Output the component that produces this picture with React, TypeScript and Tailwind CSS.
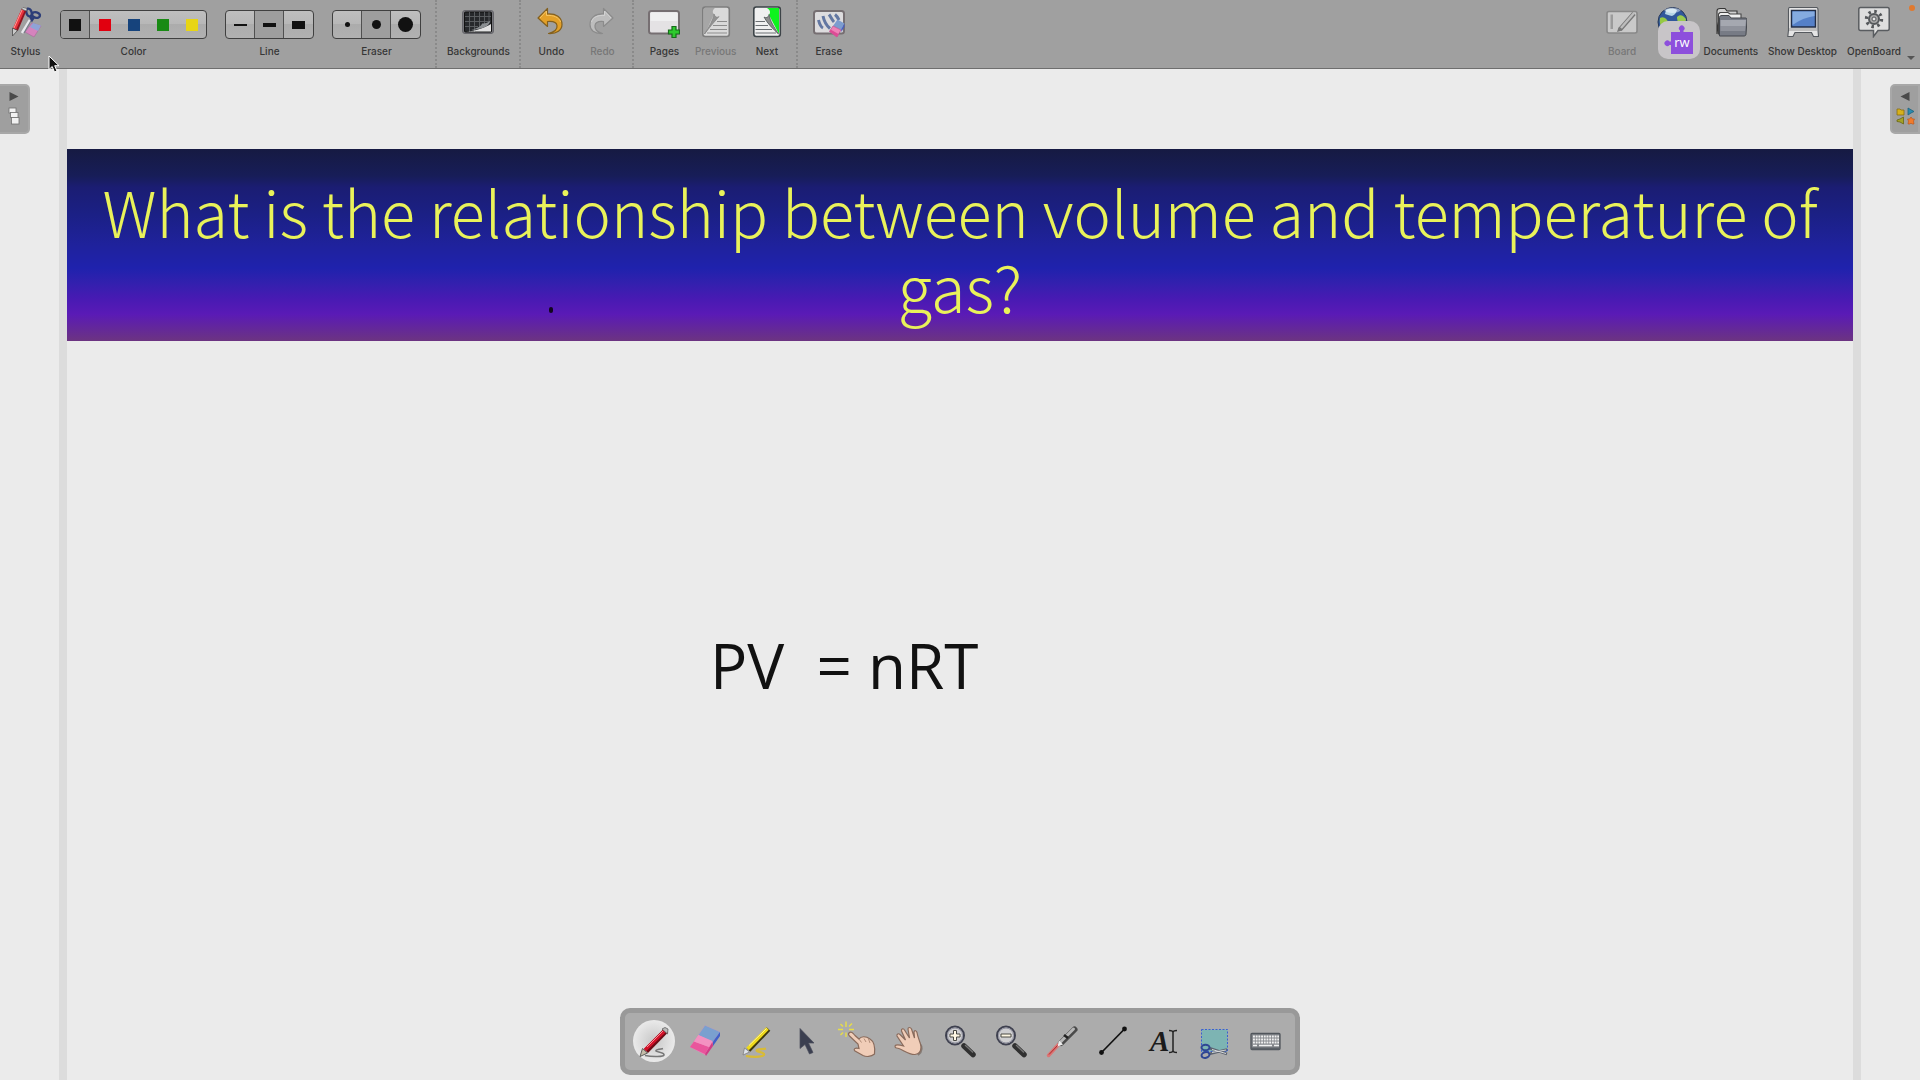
import type { ReactNode } from 'react';
import clsx from 'clsx';

function TopIcon({ children }: { children: ReactNode }) {
  return (
    <svg width="32" height="32" viewBox="0 0 32 32" fill="none" aria-hidden="true">
      {children}
    </svg>
  );
}

function StylusIcon() {
  return (
    <TopIcon>
      <path d="M15 26 L22 17 L31 20 L24 31 Z" fill="#d583bd" stroke="#a8689a" strokeWidth="0.6" />
      <path d="M20 21 L23 17 L31 19.500 L28 25 Z" fill="#8fa3d6" />
      <path d="M20 14 L12 27" stroke="#e8e8ec" strokeWidth="2.6" />
      <path d="M22 13 L14 27" stroke="#777b88" strokeWidth="1.2" />
      <ellipse cx="19" cy="6.5" rx="2.6" ry="4" transform="rotate(-20 19 6.5)" stroke="#2c3d78" strokeWidth="2.4" />
      <ellipse cx="26" cy="9" rx="4" ry="2.8" transform="rotate(15 26 9)" stroke="#2c3d78" strokeWidth="2.4" />
      <path d="M20 10 L22 14 L24 11" stroke="#2c3d78" strokeWidth="2.4" />
      <path d="M14 4 L5.500 24" stroke="#8f1420" strokeWidth="5" />
      <path d="M13 4 L4.500 23" stroke="#e8323c" strokeWidth="3.4" />
      <path d="M12 4 L4 22" stroke="#ff9a96" strokeWidth="1" />
      <path d="M2.500 22 L7.500 24.500 L2.500 30 Z" fill="#c9c9c9" stroke="#4a4a4a" strokeWidth="0.8" />
      <path d="M11.500 3 L16.500 5 L17 2.500 L13 1.500 Z" fill="#dadada" stroke="#555" strokeWidth="0.6" />
    </TopIcon>
  );
}

function BackgroundsIcon() {
  return (
    <TopIcon>
      <rect x="0.5" y="4.500" width="31" height="23" rx="2.500" fill="#77777c" stroke="#66666b" />
      <rect x="2.500" y="6" width="27" height="20" rx="1" fill="#26282b" stroke="#111" />
      <path d="M7.500 6V26M12.500 6V26M17.500 6V22M22.500 6V20M27 6V16M3 10.500H29M3 15.500H27M3 20.500H16" stroke="#5d6164" strokeWidth="0.9" />
      <path d="M4 25.500 C14 25 22 22 29 18 V25.500 Z" fill="#e2e2e2" />
      <path d="M9 24 C17 22 20 19 20 17.500 C23 18 26 16.500 28.500 14.500 C27 20 22 23 9 24 Z" fill="#8b8f92" />
    </TopIcon>
  );
}

function UndoIcon() {
  return (
    <TopIcon>
      <path
        d="M3 12 L12.500 2.500 V8 C21 7.500 27 11 27 18.500 C27 24 22 28 13.500 27.500 C19.500 26 22.500 23 22 19.500 C21.500 16 17.500 15 12.500 15.500 V20.500 Z"
        fill="#e3a028" stroke="#83601f" strokeWidth="1.200" strokeLinejoin="round"
      />
      <path d="M5 12 L11.500 5 V9.500 C18 9 24 11 25.500 16" stroke="#f5c565" strokeWidth="1" />
    </TopIcon>
  );
}

function RedoIcon() {
  return (
    <TopIcon>
      <path
        d="M27 12 L17.500 2.500 V8 C9 7.500 4 12 4 18.500 C4 24 8 28 16.500 27.500 C11 26 8.500 23 9 19.500 C9.500 16 13 15 17.500 15.500 V20.500 Z"
        fill="#bdbdbd" stroke="#8b8b8b" strokeWidth="1.200" strokeLinejoin="round"
      />
      <path d="M25 12 L18.500 5 V9.500 C12 9 7 11 5.500 16" stroke="#d2d2d2" strokeWidth="1" />
    </TopIcon>
  );
}

function PagesIcon() {
  return (
    <TopIcon>
      <rect x="1" y="5" width="30" height="22.500" rx="2.500" fill="#e4e2e4" stroke="#766f72" strokeWidth="2" />
      <path d="M2.500 6.500H29.500V15H2.500Z" fill="#efeff0" />
      <path d="M24 20.500h4v3.500h3.500v4H28v3.500h-4V28h-3.500v-4H24Z" fill="#2dcb2d" stroke="#176b1b" strokeWidth="1.200" />
    </TopIcon>
  );
}

function PreviousIcon() {
  return (
    <TopIcon>
      <rect x="2.800" y="1" width="26.500" height="29.500" rx="2.500" fill="#dadada" stroke="#7d7d7d" strokeWidth="1.600" />
      <path d="M4 2 H15 C12 4 12.500 7 14 8 L5 28 H4 Z" fill="#a6a6a6" />
      <path d="M14 8 C15 11 17 12 19 10.500 C14 16 9 22 4.500 28 C9 21 13 14 14 8Z" fill="#929292" stroke="#818181" strokeWidth="0.7" />
      <path d="M17 15.500H27M13 19.500H27M10 23.500H27M7 27H27" stroke="#8d8d8d" strokeWidth="1" />
    </TopIcon>
  );
}

function NextIcon() {
  return (
    <TopIcon>
      <rect x="2.800" y="1" width="26.500" height="29.500" rx="2.500" fill="#f0f0f0" stroke="#3d4448" strokeWidth="1.600" />
      <path d="M16 2 H28 V28 L18 9 C20 6 19 4 16 2 Z" fill="#0ef31e" />
      <path d="M13 11 C15 12.500 18 11 18 8.500 C19 15 23 21 27.500 28 C22 23 16 17 13 11Z" fill="#8c8c8c" stroke="#4f5557" strokeWidth="0.8" />
      <path d="M4.500 15.500H14M4.500 19.500H17M4.500 23.500H21M4.500 27H25" stroke="#6b6f72" strokeWidth="1" />
    </TopIcon>
  );
}

function EraseIcon() {
  return (
    <TopIcon>
      <rect x="1" y="5" width="30" height="22.500" rx="2.500" fill="#dddcde" stroke="#766f72" strokeWidth="2" />
      <path d="M5.500 14 C6.500 18 8 21 10 22M10 10 C11 15 14 20 17 22.500M16 8.500 C18 11 19 14 21 16M22 8.500 C24 10 25 12 26 14" stroke="#6377a2" strokeWidth="3" />
      <path d="M20 20 L24.500 13.500 L31.500 17.500 L28 24 Z" fill="#7c9ccf" />
      <path d="M28 23.500 L31.500 17.500 V20.500 L28.500 26Z" fill="#4a60bd" />
      <path d="M16.500 25.500 L20 20 L28 24 L24 31 Z" fill="#ee82b8" stroke="#b84d8b" strokeWidth="0.7" />
      <path d="M16.500 25.500 L17.500 23.500 L25.500 28 L24 31 Z" fill="#dd4b95" />
    </TopIcon>
  );
}

function BoardIcon() {
  return (
    <TopIcon>
      <rect x="1" y="5.500" width="30" height="21.500" rx="2" fill="#c9c9c9" stroke="#888" strokeWidth="1.600" />
      <rect x="4.500" y="8.500" width="2.500" height="14.500" fill="#9b9b9b" />
      <path d="M28 7.500 L14 23.500" stroke="#777" strokeWidth="4.500" />
      <path d="M28 7 L15 22" stroke="#bdbdbd" strokeWidth="2.400" />
      <path d="M11 26 L12.500 21.500 L16 24.500 Z" fill="#777" />
    </TopIcon>
  );
}

function WebIcon() {
  return (
    <TopIcon>
      <circle cx="15.500" cy="16" r="14.500" fill="#31589b" stroke="#263758" />
      <path d="M9 4 C12 2 17 2 20 4 C19 7 18 9 15 10 C12 9 10 9 8 8Z" fill="#b7d6e5" />
      <path d="M3 12 C7 10 10 13 11 16 L9 26 C5 23 2 19 3 12Z" fill="#96c943" />
      <path d="M20 11 C23 8 26 9 29 13 L28 19 C24 21 20 17 20 11Z" fill="#9acb4e" />
      <path d="M7 4 C11 1 19 1 24 4 C21 8 10 8 7 4Z" fill="#ffffff" opacity="0.45" />
    </TopIcon>
  );
}

function DocumentsIcon() {
  return (
    <TopIcon>
      <path d="M2 28 V5 C2 3 3 2.500 5 2.500 H10 L12 5 H22 V12 H4Z" fill="#cfcfcf" stroke="#353535" strokeWidth="1.100" />
      <path d="M3.500 28 V8 L5 6.500 H13 L15 8 H26 V14 L4 28Z" fill="#eeeeee" stroke="#454545" strokeWidth="1.100" />
      <path d="M4.500 30 V11.500 C4.500 10 5.500 9.500 7 9.500 H14 L16 12 H30 C31.500 12 32 12.500 32 14 L31 28 C31 29.500 30 30 29 30 Z" fill="#777b85" stroke="#44474d" />
      <path d="M5.500 14 H31 L30.500 20 H5.500Z" fill="#a5a8b0" />
      <path d="M5.500 20 H30.500 L30 25 H5.500Z" fill="#8f929b" />
    </TopIcon>
  );
}

function DesktopIcon() {
  return (
    <TopIcon>
      <path d="M2.500 1.500 H29.500 C31 1.500 31 2.500 31 4 V24 L31.500 30.500 H26.500 L24.500 26.500 H8 L6 30.500 H0.800 L1.500 24 V4 C1.500 2.500 1.500 1.500 2.500 1.500Z" fill="#e5e5e5" stroke="#55595e" strokeWidth="1.100" />
      <path d="M2 22 H30 V25 H2Z" fill="#bebebe" />
      <rect x="4.500" y="4.500" width="24" height="16.500" fill="#5580c8" stroke="#222c44" strokeWidth="1.500" />
      <path d="M5.500 5.500 H27.500 V10 C20 11 12 14 5.500 19Z" fill="#85abe0" />
    </TopIcon>
  );
}

function OpenBoardIcon() {
  return (
    <TopIcon>
      <path d="M2.500 1.500 H29.500 C31 1.500 31.200 2.500 31.200 3.500 V22.500 C31.200 24 30.500 24.500 29.500 24.500 H20 L15.500 30.500 V24.500 H2.500 C1 24.500 0.800 23.500 0.800 22.500 V3.500 C0.800 2 1.500 1.500 2.500 1.500Z" fill="#dedede" stroke="#595c60" strokeWidth="1.500" />
      <circle cx="16" cy="13" r="7.600" stroke="#55585b" strokeWidth="3.200" strokeDasharray="2.500 3.470" />
      <circle cx="16" cy="13" r="5" fill="#a7a7a7" stroke="#55585b" strokeWidth="2" />
      <circle cx="16" cy="13" r="2" fill="#e7e7e7" stroke="#55585b" />
    </TopIcon>
  );
}

function ToolButton({ label, icon, disabled }: { label: string; icon: ReactNode; disabled?: boolean }) {
  return (
    <button
      disabled={disabled}
      className={clsx(
        'flex min-w-[51px] flex-col items-center gap-[5px] px-[5px] pt-[6px]',
        disabled ? 'text-[#777777]' : 'text-[#363636]'
      )}
    >
      {icon}
      <span className="whitespace-nowrap">{label}</span>
    </button>
  );
}

function Segmented({ label, items, selected, divided }: { label: string; items: ReactNode[]; selected: number; divided?: boolean }) {
  return (
    <div className="flex flex-col items-center gap-[4px] pt-[10px]">
      <div
        role="group"
        aria-label={label}
        className="flex h-[29px] overflow-hidden rounded-[4px] border border-[#404040] bg-[linear-gradient(#bfbfbf,#b7b7b7_49%,#acacac_50%,#b1b1b1)]"
      >
        {items.map((item, i) => (
          <button
            key={i}
            aria-label={`${label} ${i + 1}`}
            aria-pressed={i === selected}
            className={clsx(
              'flex w-[29px] items-center justify-center',
              i === selected && 'bg-[#9e9e9e]',
              i < items.length - 1 && (divided || i === 0) && 'border-r border-[#505050]'
            )}
          >
            {item}
          </button>
        ))}
      </div>
      <span className="text-[#363636]">{label}</span>
    </div>
  );
}

function Separator() {
  return <div className="border-l-2 border-dotted border-[#8a8a8a]" />;
}

const colors = [
  <span className="h-3 w-3 bg-[#111111]" />,
  <span className="h-3 w-3 bg-[#e1000f]" />,
  <span className="h-3 w-3 bg-[#16437c]" />,
  <span className="h-3 w-3 bg-[#198a14]" />,
  <span className="h-3 w-3 bg-[#e8d514]" />,
];

const lines = [
  <span className="h-[2px] w-[13px] bg-[#111111]" />,
  <span className="h-[4px] w-[13px] bg-[#111111]" />,
  <span className="h-[8px] w-[13px] bg-[#111111]" />,
];

const erasers = [
  <span className="h-[5px] w-[5px] rounded-full bg-[#111111]" />,
  <span className="h-[9px] w-[9px] rounded-full bg-[#111111]" />,
  <span className="h-[15px] w-[15px] rounded-full bg-[#111111]" />,
];

function WebButton() {
  return (
    <button aria-label="Web" className="relative flex w-[51px] flex-col items-center pt-[6px]">
      <WebIcon />
      <span className="absolute left-[10px] top-[21px] flex h-[38px] w-[42px] items-center justify-center rounded-[10px] bg-[#c8c5c8]">
        <svg width="30" height="30" viewBox="0 0 30 30" aria-hidden="true">
          <path d="M7 7 H16 V5.500 A2.800 2.800 0 1 1 19.500 5.500 V7 H29 V29 H7 V20 H5.500 A2.800 2.800 0 1 1 5.500 16.500 H7 Z" fill="#8d4fdc" />
          <text x="18" y="22" textAnchor="middle" fill="#ffffff" fontFamily="Open Sans, sans-serif" fontSize="13">rw</text>
        </svg>
      </span>
    </button>
  );
}

function Toolbar() {
  return (
    <header className="relative flex h-[69px] border-b border-[#6e6e6e] bg-[#a0a0a0] text-[10px] font-medium leading-4">
      <ToolButton label="Stylus" icon={<StylusIcon />} />
      <div className="ml-[9px] mr-[14px] flex gap-[18px]">
        <Segmented label="Color" items={colors} selected={0} />
        <Segmented label="Line" items={lines} selected={1} divided />
        <Segmented label="Eraser" items={erasers} selected={1} divided />
      </div>
      <Separator />
      <div className="flex pl-[5px] pr-[4px]">
        <ToolButton label="Backgrounds" icon={<BackgroundsIcon />} />
      </div>
      <Separator />
      <div className="flex pl-[5px] pr-[4px]">
        <ToolButton label="Undo" icon={<UndoIcon />} />
        <ToolButton label="Redo" icon={<RedoIcon />} disabled />
      </div>
      <Separator />
      <div className="flex pl-[5px] pr-[4px]">
        <ToolButton label="Pages" icon={<PagesIcon />} />
        <ToolButton label="Previous" icon={<PreviousIcon />} disabled />
        <ToolButton label="Next" icon={<NextIcon />} />
      </div>
      <Separator />
      <div className="flex pl-[5px] pr-[4px]">
        <ToolButton label="Erase" icon={<EraseIcon />} />
      </div>
      <div className="ml-auto flex pr-[14px]">
        <ToolButton label="Board" icon={<BoardIcon />} disabled />
        <WebButton />
        <ToolButton label="Documents" icon={<DocumentsIcon />} />
        <ToolButton label="Show Desktop" icon={<DesktopIcon />} />
        <ToolButton label="OpenBoard" icon={<OpenBoardIcon />} />
      </div>
      <span className="absolute right-[5px] top-[5px] h-[6px] w-[6px] rounded-full bg-[#e0792f]" />
      <span className="absolute bottom-[8px] right-[5px] border-x-[4px] border-t-[4px] border-x-transparent border-t-[#555555]" />
      <svg className="absolute left-[48px] top-[55px] z-20" width="12" height="19" viewBox="0 0 12 19" aria-hidden="true">
        <path d="M1 1 V14.500 L4.200 11.500 L6.500 17 L9 16 L6.700 10.700 H11 Z" fill="#111" stroke="#fff" strokeWidth="1" />
      </svg>
    </header>
  );
}

function PaletteIcon({ children }: { children: ReactNode }) {
  return (
    <svg width="42" height="42" viewBox="0 0 42 42" fill="none" aria-hidden="true">
      {children}
    </svg>
  );
}

function Lens({ plus }: { plus?: boolean }) {
  return (
    <>
      <path d="M25 26 L34 34.500" stroke="#303030" strokeWidth="5.500" strokeLinecap="round" />
      <path d="M26 25 L34 32.500" stroke="#777" strokeWidth="1.300" />
      <circle cx="16" cy="15.500" r="9" fill="#cfcfd1" stroke="#3f4150" strokeWidth="2" />
      <circle cx="16" cy="15.500" r="7.500" stroke="#8d8e9c" strokeWidth="1" />
      <path
        d={plus ? 'M14.500 10.500h3v3.500h3.500v3h-3.500v3.500h-3V17H11v-3h3.500Z' : 'M11 14h10v3H11Z'}
        fill="#fff8e4" stroke="#4a4a45" strokeWidth="1"
      />
    </>
  );
}

const paletteTools: { name: string; icon: ReactNode }[] = [
  {
    name: 'Pen',
    icon: (
      <>
        <path d="M12 35.500 C19 37 32 37 31 34.500 C30 32 22 32 23 30.500 C24 29 29 29 30 28.500" stroke="#777" strokeWidth="1.500" />
        <path d="M33 10.500 L13 31" stroke="#6d0b14" strokeWidth="5.500" />
        <path d="M32 10.500 L12 30" stroke="#d3122a" strokeWidth="3.500" />
        <path d="M30.500 10.500 L14 27" stroke="#f98b92" strokeWidth="1" />
        <path d="M29 9 L32 7.500 L35 9 L34.500 14 Z" fill="#b9b9b9" stroke="#555" strokeWidth="0.700" />
        <path d="M9.500 28.500 L14.500 33 L7 36.500 Z" fill="#c4bda9" stroke="#444" strokeWidth="0.800" />
      </>
    ),
  },
  {
    name: 'Eraser',
    icon: (
      <>
        <path d="M6 27 L21 5.500 L36 12 L21 35 Z" fill="#e885b8" />
        <path d="M14.500 15 L21 5.500 L36 12 L28.500 22 Z" fill="#7aa0cf" />
        <path d="M29 21.500 L36 12 V16 L29 26 Z" fill="#3f60c8" />
        <path d="M6 27 L10 21.500 L25 27 L21 34 Z" fill="#e9559c" />
        <path d="M21 34 L28.500 22 L29 26 L22 36 Z" fill="#d03c86" />
        <path d="M10 21.500 L14.500 15 L28.500 21 L25 27Z" fill="#f391c1" />
      </>
    ),
  },
  {
    name: 'Highlighter',
    icon: (
      <>
        <path d="M11 36 C20 37.500 30 37 29 34 C27 31.500 20 32 22 30 C24 28.500 28 29.500 31 28.500" stroke="#d8bb36" strokeWidth="2.200" />
        <path d="M33.500 9 L13.500 30" stroke="#3d370e" strokeWidth="5" />
        <path d="M32.500 8.500 L12.500 29" stroke="#eed91b" strokeWidth="3.600" />
        <path d="M31.500 8.500 L14 25.500" stroke="#fff49a" strokeWidth="1" />
        <path d="M9.500 28 L14.500 32 L8 35 Z" fill="#e0e4ea" stroke="#777" strokeWidth="0.700" />
      </>
    ),
  },
  {
    name: 'Select',
    icon: <path d="M14 8.500 V28.500 L19 24.500 L23.500 34 L27 32.500 L22.500 23 H28 Z" fill="#3b3f50" stroke="#4b4e5c" strokeWidth="0.700" />,
  },
  {
    name: 'Interact',
    icon: (
      <>
        <path d="M9 1.500V7M9 12.500V17M1 9.500H6M12 9.500H17M3.500 4L6 6.500M15 3.500L12 6.500M3.500 15L6 12.500" stroke="#e8de45" strokeWidth="1.400" />
        <path d="M12 13 C14 11 16 13 18 15.500 L22 19 C24 16 29 16 33 19 C38 22 38 29 37.500 34 C34 37 29 37 26 35.500 L18 31 C16 29 18 27.500 22 28.500 L21 24 L12.500 16 C11.500 15 11 14 12 13Z" fill="#f0cdb8" stroke="#896b5c" strokeWidth="1.200" />
        <path d="M22 19 L24.500 22.500M27 18.500 L29 22M31.500 19 L33 23" stroke="#b18d79" strokeWidth="1" />
      </>
    ),
  },
  {
    name: 'Scroll',
    icon: (
      <>
        <path d="M31 22 C34 26 35 31 30 35" stroke="#857b75" strokeWidth="2" />
        <path
          d="M7 26 C8 24 12 25 15.500 26 L9 16 C8.500 14 10.500 13 12 14.500 L17.500 20 L13.500 11 C13 8.500 15.500 8 16.500 10 L21.500 18 L20 9 C20 7 22.500 7 23.500 9 L26.500 18 L26 12 C26.500 10 28.500 10.500 29 12.500 C30 19 33 23 33 27 C33 31 31 34 27 34.500 C20 35 14 28.500 8.500 28 C7.500 28 7 27 7 26 Z"
          fill="#f0cdb8" stroke="#896b5c" strokeWidth="1.200"
        />
      </>
    ),
  },
  { name: 'Zoom in', icon: <Lens plus /> },
  { name: 'Zoom out', icon: <Lens /> },
  {
    name: 'Laser pointer',
    icon: (
      <>
        <path d="M18 24 L7.500 35.500" stroke="#dc7474" strokeWidth="3.500" strokeLinecap="round" />
        <path d="M18 24 L8 34.500" stroke="#a92b2b" strokeWidth="1" />
        <path d="M33.500 9.500 L20 23" stroke="#4a4a4a" strokeWidth="6" strokeLinecap="round" />
        <path d="M32.500 9 L19 22.500" stroke="#b7b7b7" strokeWidth="3" strokeLinecap="round" />
        <path d="M23 15 L27 18" stroke="#222" strokeWidth="2.500" />
        <path d="M18 20.500 L22 24.500 L16.500 26.500Z" fill="#ededed" />
      </>
    ),
  },
  {
    name: 'Line',
    icon: (
      <>
        <path d="M9.500 32.500 L32.500 9" stroke="#111" strokeWidth="1.700" />
        <circle cx="9.500" cy="32.500" r="2.400" fill="#111" />
        <circle cx="32.500" cy="9" r="2.400" fill="#111" />
      </>
    ),
  },
  {
    name: 'Text',
    icon: (
      <>
        <text x="7" y="31" fill="#1b1b1b" fontFamily="Liberation Serif, serif" fontStyle="italic" fontWeight="bold" fontSize="29">A</text>
        <path d="M26 10.500 C28.500 10.500 30 11 30 12.500 C30 11 31.500 10.500 34 10.500 M30 12.500 V30.500 M26 32.500 C28.500 32.500 30 32 30 30.500 C30 32 31.500 32.500 34 32.500" stroke="#222" strokeWidth="1.500" />
      </>
    ),
  },
  {
    name: 'Capture',
    icon: (
      <>
        <rect x="7.500" y="9.500" width="26" height="22" fill="#7db4b3" stroke="#3c5ed2" strokeDasharray="2 1.500" />
        <path d="M15 28 L33 34 M15 34 L33 29.500" stroke="#5d6470" strokeWidth="2.600" />
        <path d="M18 29.500 L32 33.500 M18 32.500 L32 30" stroke="#d4d7da" strokeWidth="1" />
        <ellipse cx="11.500" cy="27.500" rx="4" ry="2.800" stroke="#2f4694" strokeWidth="2" />
        <ellipse cx="11.500" cy="35" rx="4" ry="2.800" transform="rotate(-15 11.500 35)" stroke="#2f4694" strokeWidth="2" />
      </>
    ),
  },
  {
    name: 'Virtual keyboard',
    icon: (
      <>
        <rect x="6" y="13.500" width="29" height="16" rx="1" fill="#85888c" stroke="#50555b" strokeWidth="1.300" />
        <path d="M8 16.500H34M8 19.500H34M8 22.500H34" stroke="#f1f1f1" strokeWidth="1.900" strokeDasharray="1.900 0.800" />
        <path d="M8 25.500H12M14 25.500H27M29 25.500H34" stroke="#f1f1f1" strokeWidth="1.700" />
        <path d="M6 28.500H35" stroke="#5b6066" strokeWidth="2" />
      </>
    ),
  },
];

function StylusPalette() {
  return (
    <nav
      aria-label="Stylus palette"
      className="absolute bottom-[5px] left-1/2 flex -translate-x-1/2 gap-[9px] rounded-[10px] border-[5px] border-[#999999] bg-[#acacac] px-[8px] pb-[8px] pt-[7px]"
    >
      {paletteTools.map((tool, i) => (
        <button
          key={tool.name}
          aria-label={tool.name}
          className={clsx('h-[42px] w-[42px] rounded-full', i === 0 && 'bg-[radial-gradient(#c8c8c8,#ececec_75%)]')}
        >
          <PaletteIcon>{tool.icon}</PaletteIcon>
        </button>
      ))}
    </nav>
  );
}

export default function App() {
  return (
    <div className="relative flex min-h-screen flex-col overflow-hidden bg-[#ebebeb] font-['Inter',sans-serif]">
      <Toolbar />
      <main className="flex flex-1">
        <aside className="w-[59px] shrink-0 pt-[15px]">
          <button aria-label="Open page list" className="flex h-[50px] w-[30px] flex-col items-center gap-[6px] rounded-r-[5px] border-y-2 border-r-2 border-[#a8a8a8] bg-[#9f9f9f] pt-[6px]">
            <svg width="10" height="9" viewBox="0 0 10 9" aria-hidden="true">
              <path d="M0.500 0 L9.500 4.500 L0.500 9 Z" fill="#4a4a4a" />
            </svg>
            <svg width="12" height="18" viewBox="0 0 12 18" fill="#f1f1f1" stroke="#707070" strokeWidth="0.800" aria-hidden="true">
              <rect x="1" y="1" width="7" height="5" />
              <rect x="2.500" y="5.500" width="7.500" height="5" />
              <rect x="3.500" y="10.500" width="7.500" height="6.500" />
            </svg>
          </button>
        </aside>
        <section className="min-w-0 flex-1 border-x-8 border-[#dcdcdc] pt-[80px]">
          <div className="relative h-[192px] bg-[linear-gradient(#161a42,#171d58_14%,#1b1d73_20%,#1b2085_34%,#1f229c_50%,#1f22ad_62%,#3320ae_70%,#481ab3_78%,#5a1ab6_86%,#6c3481)] pt-[24px]">
            <h1 className="text-center font-['Noto_Sans_CJK_SC',sans-serif] text-[63px] font-light leading-[75px] text-[#e9f25a]">
              What is the relationship between volume and temperature of gas?
            </h1>
            <span className="absolute bottom-[28px] left-[27%] h-[6px] w-[4px] rounded-full bg-[#12061f]" />
          </div>
          <p className="whitespace-pre pl-[36%] pt-[284px] font-['Open_Sans',sans-serif] text-[62px] font-medium leading-[80px] text-[#111111]">
            {'PV  = nRT'}
          </p>
        </section>
        <aside className="flex w-[59px] shrink-0 flex-col items-end pt-[15px]">
          <button aria-label="Open library" className="flex h-[50px] w-[30px] flex-col items-center gap-[6px] rounded-l-[5px] border-2 border-[#a8a8a8] bg-[#9f9f9f] pt-[6px]">
            <svg width="10" height="9" viewBox="0 0 10 9" aria-hidden="true">
              <path d="M9.500 0 L0.500 4.500 L9.500 9 Z" fill="#4a4a4a" />
            </svg>
            <svg width="19" height="18" viewBox="0 0 19 18" aria-hidden="true">
              <path d="M1 2 H4 L5 3 H8 V8 H1Z" fill="#d7b11c" stroke="#856c14" strokeWidth="0.800" />
              <path d="M12 1 L18 4.500 L15 6 L12 8Z" fill="#2b8bb0" stroke="#1c627f" strokeWidth="0.800" />
              <path d="M1 13 L4 12 L7.500 10 V17 L4 15 L1 14.500Z" fill="#a5a226" stroke="#686613" strokeWidth="0.800" />
              <path d="M15 10 L16.500 12 H18.500 L17.500 14 L18 17 H16 L15 16 L14 17 H12 L12.500 14 L11.500 12 H13.500Z" fill="#ef7b2c" stroke="#b5501a" strokeWidth="0.600" />
            </svg>
          </button>
        </aside>
      </main>
      <StylusPalette />
    </div>
  );
}
